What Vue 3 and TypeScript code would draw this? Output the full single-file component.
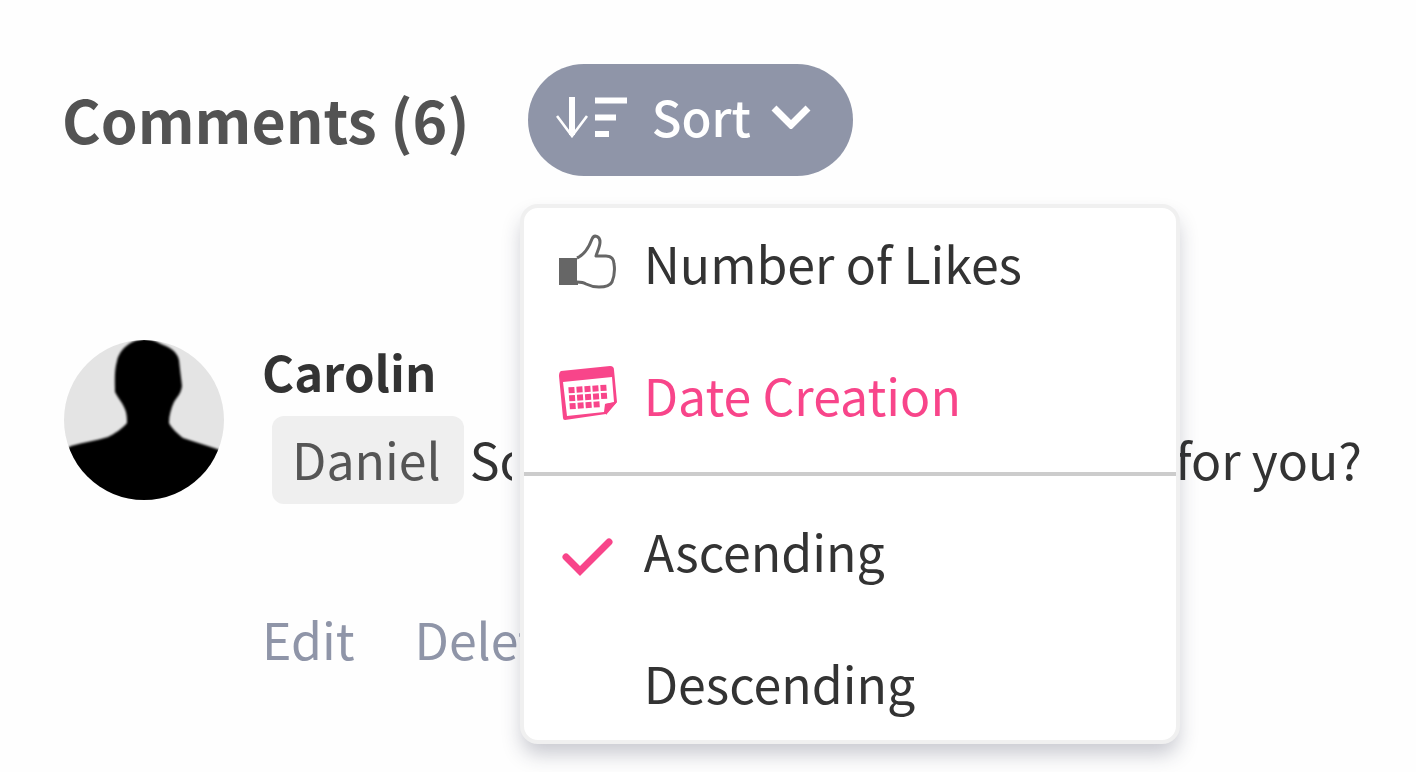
<script setup lang="ts">
import { ref } from 'vue'

type Field = 'likes' | 'date'
type Direction = 'asc' | 'desc'

const open = ref(true)
const field = ref<Field>('date')
const direction = ref<Direction>('asc')

const fields: { id: Field; label: string }[] = [
  { id: 'likes', label: 'Number of Likes' },
  { id: 'date', label: 'Date Creation' },
]
const directions: { id: Direction; label: string }[] = [
  { id: 'asc', label: 'Ascending' },
  { id: 'desc', label: 'Descending' },
]
</script>

<template>
  <main class="page">
    <header class="header">
      <h2 class="title">Comments (6)</h2>
      <div class="sort">
        <button class="sort-button" type="button" :aria-expanded="open" @click="open = !open">
          <svg class="sort-icon" viewBox="0 0 72 44" aria-hidden="true">
            <path d="M16 3V41" fill="none" stroke="#fff" stroke-width="6" />
            <path d="M1 22L16 42L31 22" fill="none" stroke="#fff" stroke-width="2.6" />
            <path d="M39 6.500H71M39 23.500H60M39 40H53" fill="none" stroke="#fff" stroke-width="6" />
          </svg>
          <span>Sort</span>
          <svg class="chevron" viewBox="0 0 40 26" aria-hidden="true">
            <path d="M3 5L20 22L37 5" fill="none" stroke="#fff" stroke-width="7" />
          </svg>
        </button>
        <div v-if="open" class="menu" role="menu">
          <button
            v-for="item in fields"
            :key="item.id"
            class="item"
            :class="{ active: field === item.id }"
            type="button"
            role="menuitemradio"
            :aria-checked="field === item.id"
            @click="field = item.id"
          >
            <svg v-if="item.id === 'likes'" class="item-icon" viewBox="0 0 60 60" aria-hidden="true">
              <path d="M1 26H20V53H1Z" fill="#666" />
              <path
                d="M19 26C26 23 31 15 34 7C36 2 42 4 42 10C42 15 39 20 38 24H48C54 24 56 28 56 32C57 38 56 45 54 50C52 54 46 55 41 55C36 55 32 54 28 52C25 50 23 50 19 50"
                fill="#fff" stroke="#666" stroke-width="3" stroke-linejoin="round"
              />
            </svg>
            <svg v-else class="item-icon" viewBox="0 0 60 60" aria-hidden="true">
              <path
                fill="#f8458a" fill-rule="evenodd"
                d="M3 7L52 2Q56 2 56 6L59 38L48 50L7 56Q5 56 5 54L1 12Q1 8 3 7ZM5 18L9 52L46 48L47 40L56 38L54 13Z"
              />
              <path fill="#f8458a" d="M47 40L59 38L48 51Z" />
              <g fill="#f8458a" transform="rotate(-4 30 32)">
                <path d="M11 22h6v6h-6zM19 22h6v6h-6zM27 22h6v6h-6zM35 22h6v6h-6zM43 22h6v6h-6zM11 30h6v6h-6zM19 30h6v6h-6zM27 30h6v6h-6zM35 30h6v6h-6zM43 30h6v6h-6zM11 38h6v6h-6zM19 38h6v6h-6zM27 38h6v6h-6zM35 38h6v6h-6z" />
              </g>
            </svg>
            <span>{{ item.label }}</span>
          </button>
          <hr class="divider" />
          <button
            v-for="item in directions"
            :key="item.id"
            class="item"
            type="button"
            role="menuitemradio"
            :aria-checked="direction === item.id"
            @click="direction = item.id"
          >
            <svg class="item-icon" viewBox="0 0 60 60" aria-hidden="true">
              <path
                v-if="direction === item.id"
                d="M8 37L22 51L51 22" fill="none" stroke="#f8458a" stroke-width="7" stroke-linecap="round"
              />
            </svg>
            <span>{{ item.label }}</span>
          </button>
        </div>
      </div>
    </header>

    <article class="comment">
      <svg class="avatar" viewBox="0 0 160 160" role="img" aria-label="Carolin">
        <defs>
          <clipPath id="avatar-circle"><circle cx="80" cy="80" r="80" /></clipPath>
          <filter id="soft-edge"><feGaussianBlur stdDeviation="1" /></filter>
        </defs>
        <g clip-path="url(#avatar-circle)">
          <path d="M0 0H160V160H0Z" fill="#e4e4e4" />
          <path
            filter="url(#soft-edge)"
            d="M82 -1C68 -1 56 8 53 21C50 31 51 44 51 52C54 58 58 62 60 67C63 73 63 78 63 83C58 89 50 94 44 97C32 101 20 102 7 106L-4 112V166H166V114L153 109C142 105 130 102 119 98C114 94 108 89 105 83C105 75 107 69 110 62C113 57 117 54 118 46C117 37 116 30 115 20C113 11 105 7 97 4C92 1 87 -1 82 -1Z"
          />
        </g>
      </svg>
      <div class="body">
        <h3 class="author">Carolin</h3>
        <p class="text">
          <span class="mention">Daniel</span>
          <span class="start">So</span>
          <span class="end">for you?</span>
        </p>
        <div class="actions">
          <button type="button">Edit</button>
          <button type="button">Delete</button>
        </div>
      </div>
    </article>
  </main>
</template>

<style>
body {
  margin: 0;
  background: #fefefe;
}
</style>

<style scoped>
.page {
  box-sizing: border-box;
  min-height: 100vh;
  padding: 64px 54px 0 64px;
  font-family: "Noto Sans CJK SC", "Noto Sans", sans-serif;
  font-size: 50px;
  line-height: 72px;
  color: #333;
}
button {
  box-sizing: border-box;
  padding: 0;
  border: 0;
  background: none;
  font: inherit;
  color: inherit;
  cursor: pointer;
  white-space: nowrap;
}
.header {
  display: flex;
  align-items: center;
  gap: 58px;
  margin-left: -2px;
}
.title {
  margin: 0;
  padding-bottom: 2px;
  font-size: 59px;
  font-weight: 700;
  color: #535353;
}
.sort {
  position: relative;
}
.sort-button {
  display: flex;
  align-items: center;
  height: 112px;
  padding: 0 42px 8px 28px;
  border-radius: 56px;
  background: #8f95a8;
  color: #fff;
  font-size: 49px;
  font-weight: 500;
}
.sort-icon {
  width: 72px;
  height: 44px;
  margin-right: 24px;
}
.chevron {
  width: 40px;
  height: 26px;
  margin-left: 20px;
}
.menu {
  position: absolute;
  z-index: 1;
  top: 140px;
  left: -8px;
  box-sizing: border-box;
  width: 660px;
  padding-top: 4px;
  border: 4px solid #f0f0f0;
  border-radius: 18px;
  background: #fff;
  box-shadow: 0 12px 20px -2px rgba(40, 45, 70, 0.25);
}
.item {
  display: flex;
  align-items: center;
  gap: 26px;
  width: 100%;
  height: 108px;
  padding: 0 0 8px 34px;
}
.item + .item {
  margin-top: 24px;
}
.active {
  color: #f8458a;
}
.item-icon {
  width: 60px;
  height: 60px;
}
.divider {
  height: 4px;
  margin: 20px 0 24px;
  border: 0;
  background: #ccc;
}
.comment {
  display: flex;
  align-items: flex-start;
  gap: 38px;
  margin-top: 164px;
}
.avatar {
  flex: none;
  width: 160px;
  height: 160px;
}
.body {
  flex: 1;
}
.author {
  margin: 0;
  font-size: 49px;
  font-weight: 700;
  line-height: 62px;
}
.text {
  display: flex;
  align-items: center;
  margin: 14px 0 0 10px;
}
.mention {
  padding: 6px 23px 10px 20px;
  border-radius: 12px;
  background: #efefef;
  color: #555;
}
.start {
  width: 42px;
  margin-left: 6px;
  padding-bottom: 4px;
  overflow: hidden;
}
.end {
  margin-left: auto;
  padding-bottom: 4px;
}
.actions {
  display: flex;
  gap: 60px;
  margin-top: 98px;
  color: #8f95a8;
}
</style>
